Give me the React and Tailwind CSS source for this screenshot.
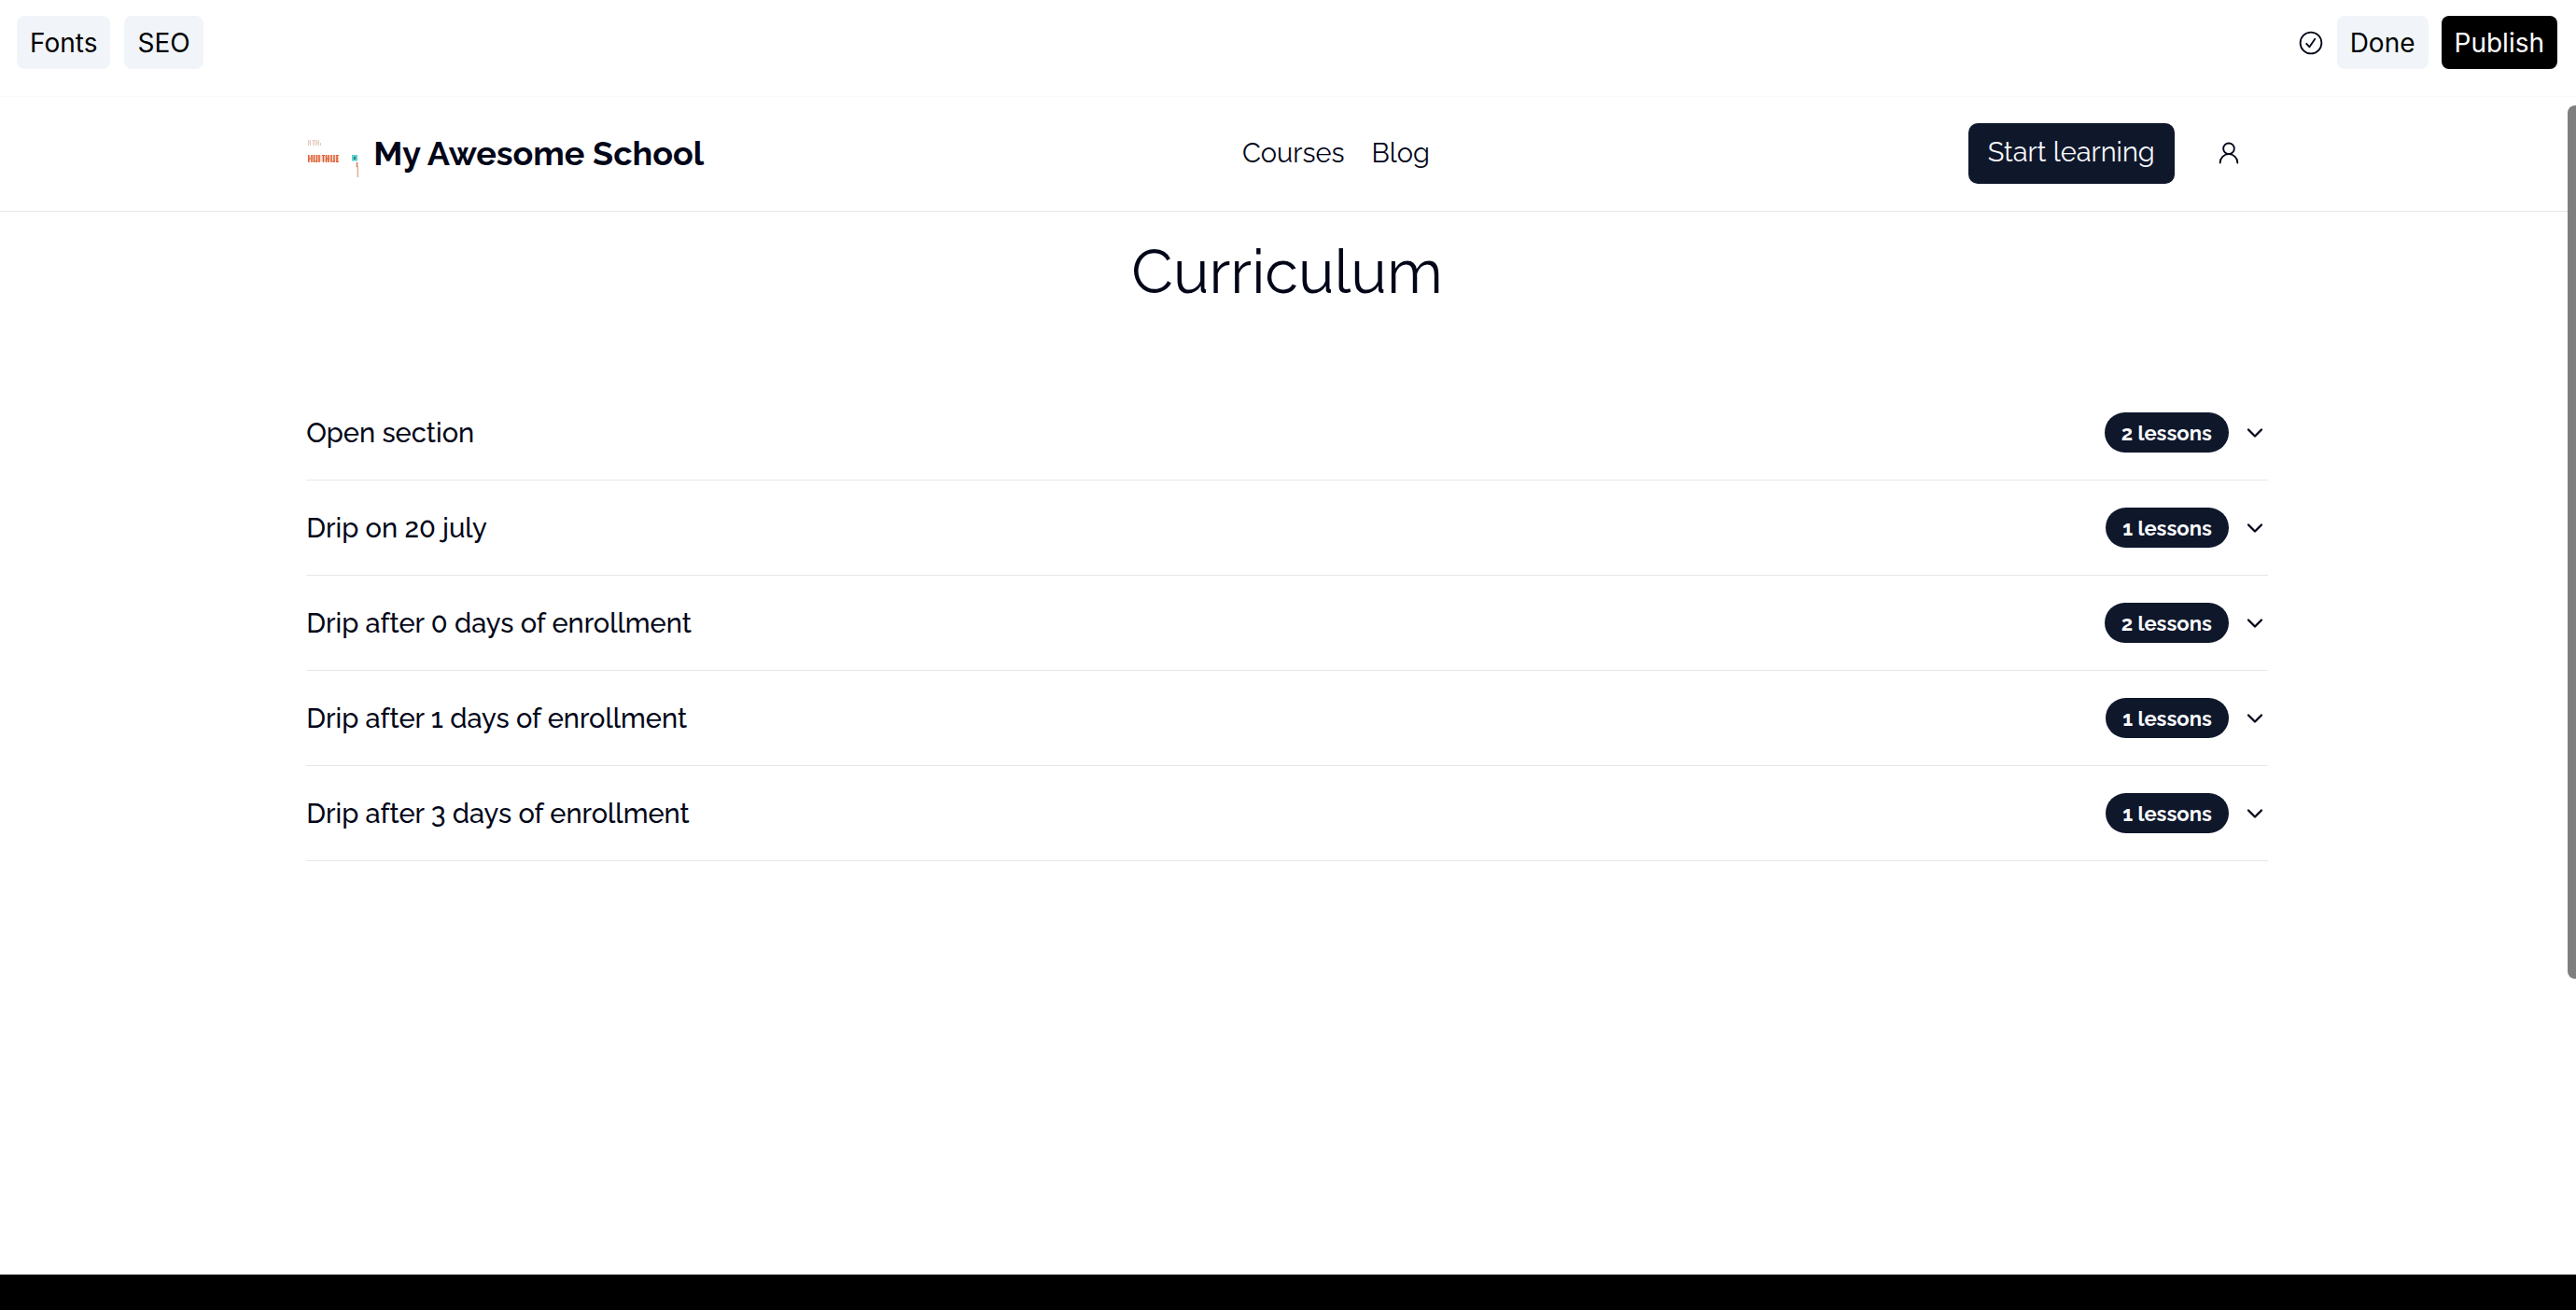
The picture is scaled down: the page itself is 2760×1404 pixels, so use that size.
import { ChevronDown, UserRound } from "lucide-react";

const sections = [
  { title: "Open section", count: 2 },
  { title: "Drip on 20 july", count: 1 },
  { title: "Drip after 0 days of enrollment", count: 2 },
  { title: "Drip after 1 days of enrollment", count: 1 },
  { title: "Drip after 3 days of enrollment", count: 1 },
];

function ToolbarButton({ dark = false, children }) {
  return (
    <button
      type="button"
      className={
        dark
          ? "h-[57px] rounded-lg bg-black px-[14px] text-[28px] text-white"
          : "h-[57px] rounded-lg bg-slate-100 px-[14px] text-[28px] text-black"
      }
    >
      {children}
    </button>
  );
}

function SavedIcon() {
  return (
    <svg
      viewBox="0 0 28 28"
      className="size-7 text-slate-950"
      fill="none"
      stroke="currentColor"
      strokeLinecap="round"
      strokeLinejoin="round"
      role="img"
      aria-label="Saved"
    >
      <circle cx="14" cy="14" r="11.4" strokeWidth="1.8" />
      <path d="M9.2 14.8 L12.5 18.3 L18.3 9.7" strokeWidth="1.8" />
    </svg>
  );
}

function SchoolLogo() {
  return (
    <svg viewBox="0 0 56 56" className="size-14" fill="none" aria-hidden="true">
      <g stroke="#e3c8bb" strokeWidth="1">
        <path d="M2.5 14v6M4.5 14v6M7.5 14v6M9.5 14v6M11.5 14v6M13.5 14v6M15.5 17v3" />
        <path d="M2 17h3M7 14.500h3M11 17h3" />
      </g>
      <path d="M2 30h33v7H2z" fill="#f6c3ab" opacity="0.5" />
      <g stroke="#dc5f33" strokeWidth="1.5">
        <path d="M2.8 30v8M6 30v8M8.500 30v8M11.500 30v8M14 30v8M18.500 30v8M21.500 30v8M24 30v8M27 30v8M30 30v8M33 30v8" />
        <path d="M2 34h3M8 37h3M17 30.500h3M22 34h3M28 37h3M32 30.500h3M32 34h2.500M32 37.300h3" strokeWidth="1.2" />
      </g>
      <rect x="49" y="30" width="6" height="6.500" fill="#5fd0d0" />
      <rect x="51" y="32" width="2" height="3" fill="#2b7f86" />
      <path d="M54.500 38v5" stroke="#d9704b" strokeWidth="1.5" />
      <path d="M55.300 42v12" stroke="#dfa080" strokeWidth="1.2" />
    </svg>
  );
}

export default function App() {
  return (
    <div className="flex min-h-screen flex-col bg-white font-['Raleway','Lato',sans-serif] text-slate-950">
      <div className="flex h-[104px] items-start justify-between border-b border-gray-50 pt-[17px] pr-5 pl-[18px] font-['Inter',sans-serif]">
        <div className="flex gap-[15px]">
          <ToolbarButton>Fonts</ToolbarButton>
          <ToolbarButton>SEO</ToolbarButton>
        </div>
        <div className="flex items-center gap-[14px]">
          <SavedIcon />
          <ToolbarButton>Done</ToolbarButton>
          <ToolbarButton dark>Publish</ToolbarButton>
        </div>
      </div>

      <div className="relative flex-1">
        <header className="h-[123px] border-b border-gray-200 pr-[2px] pb-[2px]">
          <div className="mx-auto flex h-full w-[76.2%] items-center justify-between">
            <a href="#home" className="flex items-center gap-4">
              <SchoolLogo />
              <span className="text-[36px] leading-10 font-bold">My Awesome School</span>
            </a>
            <nav className="flex gap-[29px] text-[29px] leading-10">
              <a href="#courses">Courses</a>
              <a href="#blog">Blog</a>
            </nav>
            <div className="flex items-center gap-4">
              <a
                href="#start"
                className="flex h-[65px] items-center rounded-[10px] bg-slate-900 px-[21px] text-[29px] text-slate-50"
              >
                Start learning
              </a>
              <button type="button" aria-label="Account" className="flex h-[65px] w-[84px] items-center justify-center">
                <UserRound className="size-7" strokeWidth={1.6} />
              </button>
            </div>
          </div>
        </header>

        <main className="pt-6 pr-[2px]">
          <div className="mx-auto w-[76.2%]">
            <h1 className="text-center text-[65px] leading-[80px]">Curriculum</h1>
            <div className="mt-[82px]">
              {sections.map((section) => (
                <button
                  key={section.title}
                  type="button"
                  aria-expanded="false"
                  className="flex h-[102px] w-full items-center justify-between border-b border-gray-200 text-left text-[29px] leading-10 font-medium"
                >
                  <span>{section.title}</span>
                  <span className="flex items-center gap-[14px]">
                    <span className="flex h-[43px] items-center rounded-full bg-slate-900 px-[18px] text-[22px] font-bold text-slate-50">
                      {section.count} lessons
                    </span>
                    <ChevronDown className="size-7" />
                  </span>
                </button>
              ))}
            </div>
          </div>
        </main>
        <div className="absolute top-[9px] right-0 h-[74.2%] w-[9px] rounded-l-lg bg-[#7f7f7f]" />
      </div>

      <footer className="h-[38px] bg-black" />
    </div>
  );
}
